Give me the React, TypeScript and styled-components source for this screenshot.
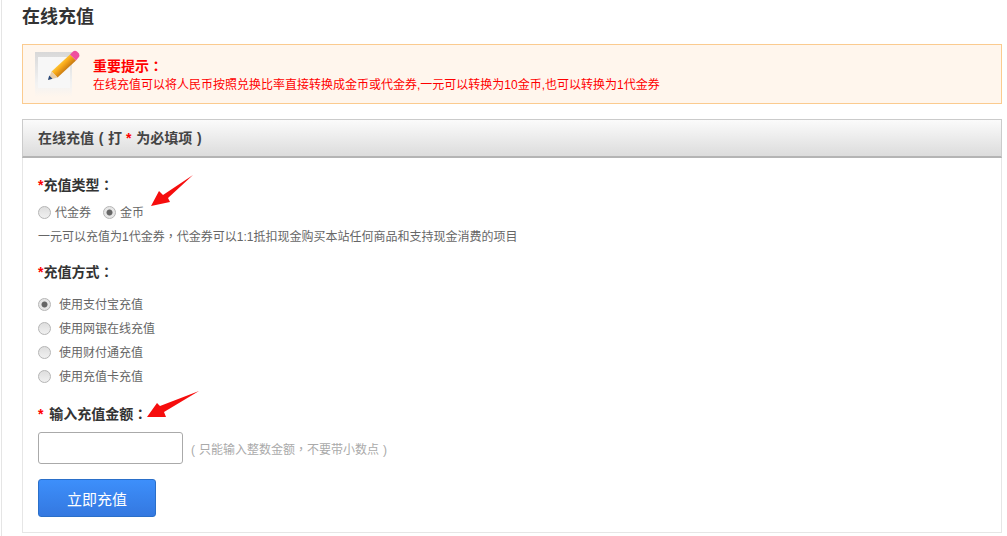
import * as React from 'react';
import styled, { createGlobalStyle } from 'styled-components';

const GlobalStyle = createGlobalStyle`
    html, body {
        margin: 0;
        padding: 0;
        background: #fff;
        overflow: hidden;
    }
    body {
        font-family: "Liberation Sans", "Noto Sans CJK SC", sans-serif;
        font-size: 12px;
        color: #555;
    }
`;

const Page = styled.div`
    width: 1007px;
    height: 536px;
    box-sizing: border-box;
    overflow: hidden;
`;

const Content = styled.div`
    width: 1001px;
    height: 536px;
    box-sizing: border-box;
    margin-left: 1px;
    padding-left: 20px;
    border-left: 1px solid #e5e5e5;
`;

const Title = styled.h2`
    margin: 0;
    height: 44px;
    line-height: 34px;
    font-size: 18px;
    font-weight: bold;
    color: #333;
`;

const Notice = styled.div`
    height: 60px;
    box-sizing: border-box;
    border: 1px solid #fbcb8f;
    background: #fff6ed;
    display: flex;
    align-items: center;
    padding-left: 12px;
`;

const NoticeIcon = styled.svg`
    width: 46px;
    height: 48px;
    flex: none;
    margin-right: 12px;
`;

const NoticeCopy = styled.div`
    padding-top: 2px;
`;

const NoticeTitle = styled.div`
    font-size: 14px;
    line-height: 18px;
    font-weight: bold;
    color: #f00;
`;

const NoticeText = styled.div`
    font-size: 12px;
    line-height: 20px;
    color: #f00;
`;

const Panel = styled.div`
    margin-top: 15px;
    height: 414px;
    box-sizing: border-box;
    border: 1px solid #e6e6e6;
    border-top: none;
`;

const PanelHead = styled.div`
    height: 39px;
    box-sizing: border-box;
    margin: 0 -1px;
    padding-left: 15px;
    border: 1px solid #cbcbcb;
    border-bottom: 2px solid #b4b4b4;
    background: linear-gradient(#fbfbfb, #dcdcdc);
    line-height: 37px;
    font-size: 14px;
    font-weight: bold;
    color: #444;
`;

const Star = styled.span<{ $gap?: number }>`
    color: #f00;
    margin-right: ${p => p.$gap || 0}px;
`;

/* centred full-width punctuation, as the reference's font draws it */
const Punct = styled.span`
    font-family: "Noto Sans CJK TC", sans-serif;
`;

const Paren = styled.span`
    display: inline-block;
    width: 1em;
    text-align: center;
`;

const PanelBody = styled.div`
    display: flow-root;
    padding: 0 15px;
    position: relative;
`;

const Label = styled.div<{ $top: number }>`
    margin-top: ${p => p.$top}px;
    height: 20px;
    line-height: 20px;
    font-size: 14px;
    font-weight: bold;
    color: #333;
`;

const InlineOptions = styled.div`
    display: flex;
    gap: 12px;
    margin-top: 8px;
`;

const StackOptions = styled.div`
    display: flex;
    flex-direction: column;
    margin-top: 10px;
`;

const Option = styled.div<{ $height: number }>`
    display: flex;
    align-items: center;
    height: ${p => p.$height}px;
    color: #666;
`;

const Radio = styled.span<{ $checked?: boolean; $gap: number }>`
    width: 13px;
    height: 13px;
    flex: none;
    box-sizing: border-box;
    margin-top: 2px;
    margin-right: ${p => p.$gap}px;
    border: 1px solid #b5b5b5;
    border-radius: 50%;
    background: ${p => p.$checked
        ? 'radial-gradient(circle, #666 0, #666 2.6px, #e6e6e6 3.4px)'
        : 'linear-gradient(#dedede, #f0f0f0)'};
`;

const Hint = styled.div`
    margin-top: 6px;
    line-height: 20px;
    color: #666;
`;

const AmountRow = styled.div`
    display: flex;
    align-items: center;
    margin-top: 9px;
`;

const AmountInput = styled.input`
    width: 145px;
    height: 32px;
    box-sizing: border-box;
    border: 1px solid #aaa;
    border-radius: 3px;
    background: #fff;
    outline: none;
`;

const AmountHint = styled.span`
    margin-left: 4px;
    color: #aaa;
`;

const SubmitButton = styled.button`
    display: block;
    width: 118px;
    height: 38px;
    margin-top: 15px;
    padding: 0;
    box-sizing: border-box;
    border: 1px solid #2a6fc9;
    border-radius: 3px;
    background: linear-gradient(#3d8ffb, #3478e0);
    color: #fff;
    font-family: inherit;
    font-size: 15px;
`;

const Arrow = styled.svg<{ $left: number; $top: number }>`
    position: absolute;
    left: ${p => p.$left}px;
    top: ${p => p.$top}px;
`;

const PencilIcon = () => (
    <NoticeIcon viewBox="0 0 46 48">
        <defs>
            <linearGradient id="sheet" x1="0" y1="0" x2="0" y2="1">
                <stop offset="0" stopColor="#d8d8d8" />
                <stop offset="0.7" stopColor="#f2f2f2" />
                <stop offset="1" stopColor="#fff6ed" />
            </linearGradient>
            <linearGradient id="wood" gradientUnits="userSpaceOnUse" x1="15" y1="20" x2="23" y2="28">
                <stop offset="0" stopColor="#ffd84a" />
                <stop offset="0.5" stopColor="#f8a91a" />
                <stop offset="1" stopColor="#c87a12" />
            </linearGradient>
        </defs>
        <rect x="0" y="2" width="37" height="45" fill="url(#sheet)" />
        <rect x="3" y="7" width="32" height="31" fill="#f7f7f7" />
        <path d="M16.5 21.5 L35 4.5 L41 10.5 L22.5 27.5 Z" fill="url(#wood)" />
        <path d="M35 4.5 L38 1.5 Q40 0 42 1.5 L44 3.5 Q45 5.5 43.5 7.5 L41 10.5 Z" fill="#ef4e9e" />
        <path d="M16.5 21.5 L22.5 27.5 L13 30 Z" fill="#e9cda6" />
        <path d="M14.2 25.5 L17.5 28.7 L13 30 Z" fill="#27497c" />
    </NoticeIcon>
);

const RedArrow = ({ left, top, width, height, points }: { left: number, top: number, width: number, height: number, points: string }) => (
    <Arrow $left={left} $top={top} width={width} height={height} viewBox={`0 0 ${width} ${height}`}>
        <polygon points={points} fill="#f60d0d" />
    </Arrow>
);

const payWays = ['使用支付宝充值', '使用网银在线充值', '使用财付通充值', '使用充值卡充值'];

export default function App() {
    return (
        <Page>
            <GlobalStyle />
            <Content>
                <Title>在线充值</Title>
                <Notice>
                    <PencilIcon />
                    <NoticeCopy>
                        <NoticeTitle>重要提示<Punct>：</Punct></NoticeTitle>
                        <NoticeText>在线充值可以将人民币按照兑换比率直接转换成金币或代金券,一元可以转换为10金币,也可以转换为1代金券</NoticeText>
                    </NoticeCopy>
                </Notice>
                <Panel>
                    <PanelHead>在线充值<Paren>(</Paren>打 <Star $gap={1}>*</Star> 为必填项<Paren>)</Paren></PanelHead>
                    <PanelBody>
                        <Label $top={16}><Star>*</Star>充值类型<Punct>：</Punct></Label>
                        <InlineOptions>
                            <Option $height={18}><Radio $gap={4} />代金券</Option>
                            <Option $height={18}><Radio $gap={4} $checked />金币</Option>
                        </InlineOptions>
                        <Hint>一元可以充值为1代金券<Punct>，</Punct>代金券可以1:1抵扣现金购买本站任何商品和支持现金消费的项目</Hint>
                        <Label $top={14}><Star>*</Star>充值方式<Punct>：</Punct></Label>
                        <StackOptions>
                            {payWays.map((way, index) => (
                                <Option key={index} $height={24}><Radio $gap={8} $checked={index === 0} />{way}</Option>
                            ))}
                        </StackOptions>
                        <Label $top={16}><Star $gap={2}>*</Star> 输入充值金额<Punct>：</Punct></Label>
                        <AmountRow>
                            <AmountInput />
                            <AmountHint><Paren>(</Paren>只能输入整数金额<Punct>，</Punct>不要带小数点<Paren>)</Paren></AmountHint>
                        </AmountRow>
                        <SubmitButton>立即充值</SubmitButton>
                        <RedArrow left={128} top={17} width={43} height={32} points="42,0 17,23 19,27 0,31 8,16 12,20" />
                        <RedArrow left={124} top={233} width={53} height={27} points="52,0 17,21 19,26 0,26 10,12 13,15" />
                    </PanelBody>
                </Panel>
            </Content>
        </Page>
    );
}
